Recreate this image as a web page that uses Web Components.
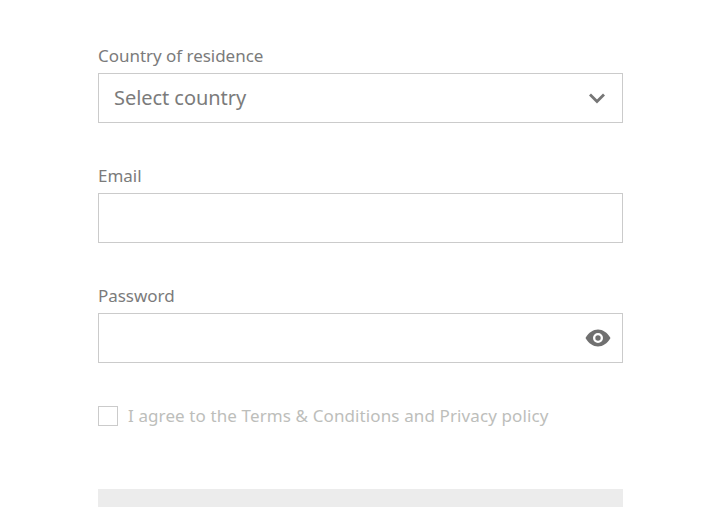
<!DOCTYPE html>
<html lang="en">
<head>
<meta charset="utf-8">
<title>Sign up</title>
<style>
  html, body { margin: 0; height: 100%; overflow: hidden; background: #fff; }
  body { font-family: "Noto Sans", "Open Sans", sans-serif; }
</style>
</head>
<body>
<signup-form>
  <form-field label="Country of residence">
    <select-box placeholder="Select country"></select-box>
  </form-field>
  <form-field label="Email">
    <text-box></text-box>
  </form-field>
  <form-field label="Password">
    <text-box>
      <svg slot="icon" width="26" height="18" viewBox="0 0 26 18">
        <path fill="#707070" fill-rule="evenodd" d="M0.500 9C3.800 3.400 8.200 0.500 13 0.500S22.200 3.400 25.500 9C22.200 14.600 17.800 17.500 13 17.500S3.800 14.600 0.500 9zM13 4a5 5 0 1 0 0 10a5 5 0 0 0 0-10z"/>
        <circle cx="13" cy="9" r="2.700" fill="#707070"/>
      </svg>
    </text-box>
  </form-field>
  <agree-check>I agree to the Terms &amp; Conditions and Privacy policy</agree-check>
  <submit-bar></submit-bar>
</signup-form>

<script>
class SignupForm extends HTMLElement {
  constructor() {
    super();
    this.shadowDOM = this.attachShadow({ mode: "open" });
  }

  connectedCallback() {
    this.shadowDOM.innerHTML = /* html */ `
      <style>
        :host {
          display: flex;
          flex-direction: column;
          gap: 40px;
          width: 525px;
          margin-left: 98px;
          padding-top: 43px;
        }
      </style>
      <slot></slot>
    `;
  }
}

class FormField extends HTMLElement {
  constructor() {
    super();
    this.shadowDOM = this.attachShadow({ mode: "open" });
  }

  connectedCallback() {
    this.shadowDOM.innerHTML = /* html */ `
      <style>
        :host {
          display: block;
        }
        label {
          display: block;
          height: 30px;
          line-height: 26px;
          font-size: 17px;
          letter-spacing: -0.03px;
          color: #7b7b7b;
        }
      </style>
      <label></label>
      <slot></slot>
    `;
    this.shadowDOM.querySelector("label").textContent = this.getAttribute("label");
  }
}

class SelectBox extends HTMLElement {
  constructor() {
    super();
    this.shadowDOM = this.attachShadow({ mode: "open" });
  }

  connectedCallback() {
    this.shadowDOM.innerHTML = /* html */ `
      <style>
        :host {
          display: flex;
          align-items: center;
          justify-content: space-between;
          box-sizing: border-box;
          height: 50px;
          padding: 0 16px 0 15px;
          border: 1px solid #cbcbcb;
          font-size: 20px;
          letter-spacing: -0.05px;
          color: #7b7b7b;
        }
        span {
          padding-bottom: 2px;
        }
        svg {
          display: block;
        }
      </style>
      <span></span>
      <svg width="18" height="12" viewBox="0 0 18 12">
        <path d="M2 2.500L9 9.500L16 2.500" fill="none" stroke="#767676" stroke-width="2.800"/>
      </svg>
    `;
    this.shadowDOM.querySelector("span").textContent = this.getAttribute("placeholder");
  }
}

class TextBox extends HTMLElement {
  constructor() {
    super();
    this.shadowDOM = this.attachShadow({ mode: "open" });
  }

  connectedCallback() {
    this.shadowDOM.innerHTML = /* html */ `
      <style>
        :host {
          display: flex;
          align-items: center;
          justify-content: flex-end;
          box-sizing: border-box;
          height: 50px;
          padding: 0 11px;
          border: 1px solid #cbcbcb;
        }
      </style>
      <slot name="icon"></slot>
    `;
  }
}

class AgreeCheck extends HTMLElement {
  constructor() {
    super();
    this.shadowDOM = this.attachShadow({ mode: "open" });
  }

  connectedCallback() {
    this.shadowDOM.innerHTML = /* html */ `
      <style>
        :host {
          display: flex;
          align-items: center;
          gap: 10px;
          margin-top: 3px;
          font-size: 17px;
          letter-spacing: 0.11px;
          line-height: 20px;
          color: #bdbebb;
        }
        .box {
          box-sizing: border-box;
          width: 20px;
          height: 20px;
          border: 1px solid #cbcbcb;
        }
      </style>
      <div class="box"></div>
      <span><slot></slot></span>
    `;
  }
}

class SubmitBar extends HTMLElement {
  constructor() {
    super();
    this.shadowDOM = this.attachShadow({ mode: "open" });
  }

  connectedCallback() {
    this.shadowDOM.innerHTML = /* html */ `
      <style>
        :host {
          display: block;
          height: 18px;
          margin-top: 23px;
          background: #ececec;
        }
      </style>
    `;
  }
}

customElements.define("signup-form", SignupForm);
customElements.define("form-field", FormField);
customElements.define("select-box", SelectBox);
customElements.define("text-box", TextBox);
customElements.define("agree-check", AgreeCheck);
customElements.define("submit-bar", SubmitBar);
</script>
</body>
</html>
